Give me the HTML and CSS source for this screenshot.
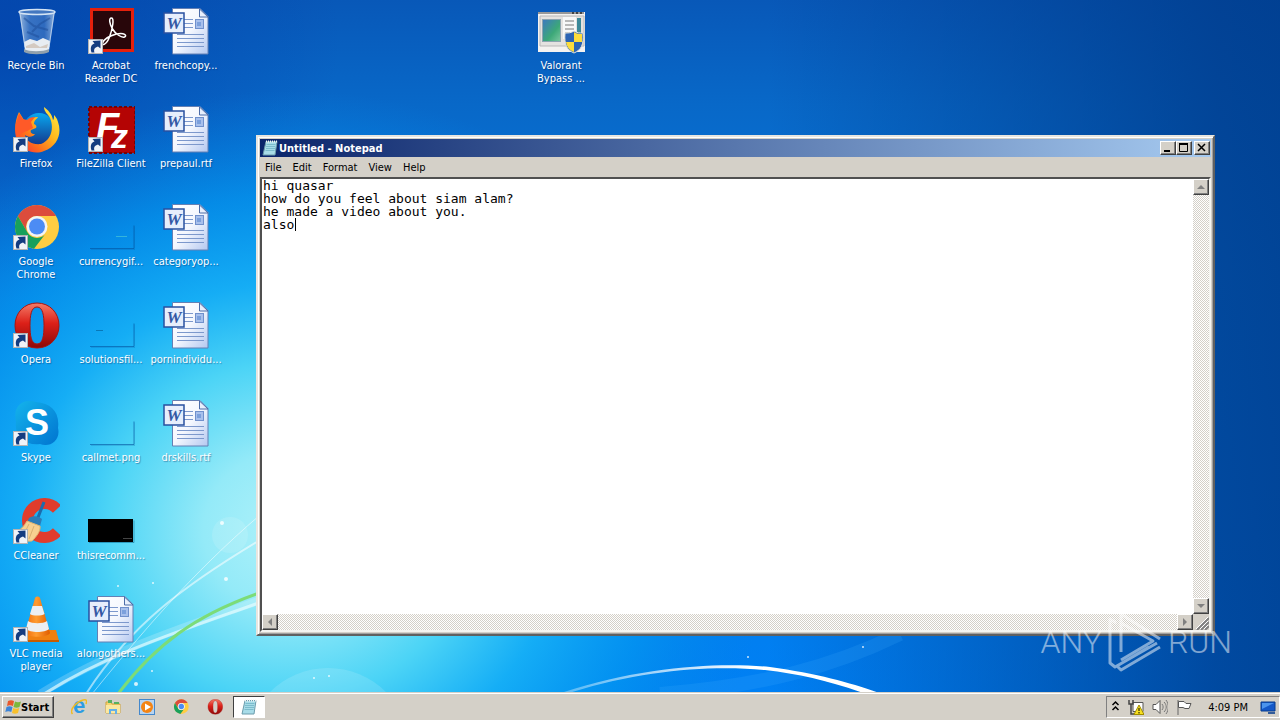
FILE: index.html
```html
<!DOCTYPE html>
<html lang="en">
<head>
<meta charset="utf-8">
<title>Desktop</title>
<link rel="stylesheet" href="styles.css">
</head>
<body>
<svg class="defs" width="0" height="0" aria-hidden="true">
  <defs>
    <linearGradient id="gDoc" x1="0" y1="0" x2="1" y2="1"><stop offset="0" stop-color="#fff"/><stop offset=".5" stop-color="#f4f7fe"/><stop offset="1" stop-color="#b4c8f0"/></linearGradient>
    <linearGradient id="gRed" x1="0" y1="0" x2="0" y2="1"><stop offset="0" stop-color="#f47c68"/><stop offset=".45" stop-color="#dc2018"/><stop offset="1" stop-color="#8c0808"/></linearGradient>
    <linearGradient id="gBin" x1="0" y1="0" x2="1" y2="0"><stop offset="0" stop-color="#b8cfe8" stop-opacity=".85"/><stop offset=".3" stop-color="#5b8fd0" stop-opacity=".6"/><stop offset=".7" stop-color="#4a80c8" stop-opacity=".6"/><stop offset="1" stop-color="#b4cdea" stop-opacity=".8"/></linearGradient>
    <linearGradient id="gFox" x1="1" y1="0" x2="0" y2="1"><stop offset="0" stop-color="#fff34a"/><stop offset=".4" stop-color="#ffb81c"/><stop offset=".7" stop-color="#ff6a1c"/><stop offset="1" stop-color="#f0204c"/></linearGradient>
    <linearGradient id="gGlobe" x1="0" y1="0" x2="0" y2="1"><stop offset="0" stop-color="#08a8f0"/><stop offset="1" stop-color="#14388c"/></linearGradient>
    <linearGradient id="gSky" x1="0" y1="0" x2="1" y2="1"><stop offset="0" stop-color="#14b4ec"/><stop offset="1" stop-color="#0074d0"/></linearGradient>
    <linearGradient id="gCone" x1="0" y1="0" x2="1" y2="0"><stop offset="0" stop-color="#f06808"/><stop offset=".45" stop-color="#ff9c30"/><stop offset="1" stop-color="#e05c00"/></linearGradient>
    <linearGradient id="gPic" x1="0" y1="0" x2="1" y2="1"><stop offset="0" stop-color="#3c78c0"/><stop offset=".6" stop-color="#3ca878"/><stop offset="1" stop-color="#7cc8a0"/></linearGradient>

    <symbol id="arrow" viewBox="0 0 15 15">
      <rect x=".5" y=".5" width="14" height="14" fill="#f0f3f8" stroke="#b4b4b4"/>
      <path d="M3.500 13.500C2 9 3 5.500 6.500 4.500L4.500 2l8-.5v8l-2.500-2C6.500 8.500 5.500 10.500 6.500 13.500z" fill="#143c80"/>
    </symbol>
    <symbol id="word" viewBox="0 0 48 48">
      <path d="M10.500.5H38l8 8V46H10.500z" fill="url(#gDoc)" stroke="#6480b4"/>
      <path d="M37.500 1v8H46z" fill="#e8effc" stroke="#4c6ca8"/>
      <path d="M22 11.500h9M22 15.500h9M22 19.500h9M15 26.500h27M15 30.500h27M15 34.500h27M15 38.500h27" stroke="#7c98cc"/>
      <rect x="33.500" y="11.500" width="8" height="9" fill="#a8c0ec" stroke="#7090cc"/>
      <rect x="35" y="14" width="4" height="4" fill="#7ca0dc"/>
      <rect x="2" y="5" width="20" height="20" fill="#e6eefc" stroke="#2850a0" stroke-width="1.500"/>
      <text x="12" y="21" text-anchor="middle" font-family="Liberation Serif, serif" font-size="17" font-weight="bold" font-style="italic" fill="#3458a4">W</text>
    </symbol>
    <symbol id="bin" viewBox="0 0 48 48">
      <path d="M7 3h36l-6 40c-4 3-20 3-24 0z" fill="url(#gBin)"/>
      <path d="M12 34l6-3 7 2 6-3 7 3-1 9c-4 3-20 3-24 0z" fill="#e8edf2"/>
      <path d="M14 38l8-3 6 4 8-3-1 4H14z" fill="#c0a890" opacity=".5"/>
      <path d="M12 10l10 8 14 4M20 24l8-8 10-6M15 24l12 5" stroke="#1c4c98" stroke-width="2" fill="none" opacity=".5"/>
      <path d="M12 41c5 3 19 3 25 0v3c-5 3-20 3-25 0z" fill="#90a0ac"/>
      <ellipse cx="25" cy="4" rx="18" ry="2.500" fill="#4478c0" stroke="#d4e4f4" stroke-width="1.500"/>
      <path d="M8 5l5 34M42 5l-5 34" stroke="#cfe0f4" opacity=".7"/>
    </symbol>
    <symbol id="acrobat" viewBox="0 0 48 48">
      <rect x="4.500" y="1.500" width="41" height="41" fill="#28060a" stroke="#e4200c" stroke-width="3"/>
      <path d="M24.500 10c-3 0-2 6 1 11s9 9 12 8 0-5-8-3-13 6-14 9 4 2 7-6 5-19 2-19z" fill="none" stroke="#fff" stroke-width="1.500"/>
    </symbol>
    <symbol id="firefox" viewBox="0 0 48 48">
      <circle cx="27" cy="23" r="16" fill="url(#gGlobe)"/>
      <path d="M32 1c0 5 4 7 6 11 4 9 2 22-9 26-9 1-15-3-16-9 4 3 8 2 10-1-4 0-5-2-4-4l5-2c1-2 0-3-2-4 0-4 3-5 4-7-4 0-7 1-9 4l-5-1-5-8C3 14 1 27 6 36c5 9 17 13 26 9 14-5 18-18 14-29-1-4-3-6-4-7 0 3 0 4-1 5-1-6-5-10-9-13z" fill="url(#gFox)"/>
      <path d="M7 7L5 14c-2 5-2 12 1 18 2-6 9-6 11-8l4-2-2-6 4-5c-4 0-6 1-8 3l-4-1z" fill="#ff5a28"/>
    </symbol>
    <symbol id="filezilla" viewBox="0 0 48 48">
      <rect x="2" y="1" width="46" height="46" fill="#b40404"/>
      <rect x="2" y="1" width="46" height="46" fill="none" stroke="#780404" stroke-width="2" stroke-dasharray="3 2"/>
      <text x="9" y="34" font-family="Liberation Sans, sans-serif" font-size="38" font-weight="bold" font-style="italic" fill="#fff">F</text>
      <text x="24" y="42" font-family="Liberation Sans, sans-serif" font-size="34" font-weight="bold" font-style="italic" fill="#fff">z</text>
    </symbol>
    <symbol id="chrome" viewBox="0 0 48 48">
      <circle cx="25" cy="23" r="22" fill="#ffcd42"/>
      <path d="M5.900 12A22 22 0 0 1 44 12H25a11 11 0 0 0-9.500 16.500z" fill="#dc4c3c"/>
      <path d="M5.900 12A22 22 0 0 0 22 44.800l12.500-16.300a11 11 0 0 1-19 0z" fill="#18a05c"/>
      <circle cx="25" cy="22.500" r="10.500" fill="#f4f4f4"/><circle cx="25" cy="22.500" r="8" fill="#4c8cf4"/>
    </symbol>
    <symbol id="opera" viewBox="0 0 48 48">
      <path fill-rule="evenodd" d="M25 1C12 1 3 11 3 23.500S12 46 25 46s22-10 22-22.500S38 1 25 1zm0 4c6 0 7 9 7 18.500S31 42 25 42s-7-9-7-18.500S19 5 25 5z" fill="url(#gRed)" stroke="#a81410"/>
    </symbol>
    <symbol id="skype" viewBox="0 0 48 48">
      <path d="M5 8C9 0 19 0 24 2c15 1 24 10 22 26 3 12-8 20-18 16C13 46 2 36 4 22c-1-6-1-11 1-14z" fill="url(#gSky)"/>
      <text x="25" y="35" text-anchor="middle" font-family="Liberation Sans, sans-serif" font-size="36" font-weight="bold" fill="#fff">S</text>
    </symbol>
    <symbol id="ccleaner" viewBox="0 0 48 48">
      <path d="M45 11A17 17 0 1 0 45 34" fill="none" stroke="#e03c2c" stroke-width="11"/>
      <path d="M32 4L25 22" stroke="#1c6cac" stroke-width="3"/>
      <path d="M17 20c4-3 10-2 13 1l-2 7-13-3z" fill="#2c7cb8"/>
      <path d="M15 23l13 5c1 5-4 11-8 15-7 1-14-3-17-9 6-2 9-6 12-11z" fill="#f8d090" stroke="#e0b470"/>
      <path d="M17 26l-6 12M22 28l-5 13" stroke="#dcb070"/>
    </symbol>
    <symbol id="vlc" viewBox="0 0 48 48">
      <path d="M10 34h34l3 11H6z" fill="#f08010"/><path d="M6 44h41v2H6z" fill="#c85c00"/>
      <path d="M23 2c1-2 4-2 5 0l10 35c-3 5-22 5-25 0z" fill="url(#gCone)"/>
      <path d="M20.500 10h9.500l2.500 8c-3 2-12 2-14.500 0zM16 25c4 3 15 3 19 0l2 8c-4 4-19 4-23 0z" fill="#eceff2"/>
    </symbol>
    <symbol id="thumb" viewBox="0 0 48 48">
      <path d="M3 44.500h44v-23" fill="none" stroke="#04509c" stroke-opacity=".6"/>
      <path d="M4 45.500h44v-23" fill="none" stroke="#04509c" stroke-opacity=".2"/>
    </symbol>
    <symbol id="black" viewBox="0 0 48 48">
      <rect x="1" y="21" width="45" height="23" fill="#000"/><path d="M36 40.500h9" stroke="#444"/><path d="M2 44.500h45v-22" fill="none" stroke="#046088" stroke-opacity=".5"/>
    </symbol>
    <symbol id="app" viewBox="0 0 48 48">
      <path d="M1 4h47v40H1z" fill="#f4f2f0"/><path d="M1 5h46" stroke="#989898" stroke-width="2"/><path d="M35 5h11" stroke="#444" stroke-width="2" stroke-dasharray="2 2"/><path d="M3 8h44v30H3z" fill="#e4e2e0" stroke="#b8b8b8"/>
      <rect x="5.500" y="11.500" width="18" height="22" fill="url(#gPic)" stroke="#8ca4b0"/>
      <path d="M26 9h13v22H26z" fill="#f8f8f8"/><path d="M28 13h9M28 17h9M28 21h9M28 25h7" stroke="#b8b8b8" stroke-width="2"/><path d="M40 10h4v17h-4z" fill="#3c8898"/>
      <path d="M37 23c3 2 6 2 9 2 1 12-2 17-9 20-7-3-10-8-9-20 3 0 6 0 9-2z" fill="#2c64b4" stroke="#e4e4dc"/>
      <path d="M37 24c3 2 5 2 8 2v8h-8zM37 34v10c-5-2-7-5-8-10z" fill="#fcdc3c"/>
    </symbol>
    <symbol id="note" viewBox="0 0 16 16">
      <path d="M4 1.500h11L13 15H1z" fill="#a8dce8" stroke="#6c9cac"/><path d="M4.500 4.500h9M4 6.500h9M4 8.500h9M3.500 10.500h9" stroke="#7cbccc"/><path d="M4 1.500h11" stroke="#f4f4f4" stroke-width="2" stroke-dasharray="1 1"/>
    </symbol>
    <symbol id="flag" viewBox="0 0 16 16">
      <path d="M3 2c2-1 4-1 6 0L8 7C6 6 4 6 2 7z" fill="#e8582c"/><path d="M10 2.500c2 1 4 1 6 0L14.500 8c-2 1-4 1-6 0z" fill="#7cb83c"/><path d="M1.500 8c2-1 4-1 6 0l-1.200 5c-2-1-4-1-6 0z" fill="#3c84d8"/><path d="M8.200 9c2 1 4 1 6 0L13 14c-2 1-4 1-6 0z" fill="#f8c02c"/>
    </symbol>
    <symbol id="ie" viewBox="0 0 16 16">
      <text x="8" y="14" text-anchor="middle" font-family="Liberation Sans, sans-serif" font-size="22" font-weight="bold" fill="#2c9ce4">e</text>
      <path d="M1.500 15C-2 11 5 3 12 1c4-1 4 1 3 4" fill="none" stroke="#f0bc24" stroke-width="1.500"/>
    </symbol>
    <symbol id="folder" viewBox="0 0 16 16">
      <path d="M1 3h5l1 2h8v9H1z" fill="#f4d470" stroke="#d0a43c"/><path d="M3 1h4v3H3zM9 3h5v2H9z" fill="#58b060"/><path d="M1 6h14v8H1z" fill="#fbe8a0"/><path d="M4 10h8v5h-2v-3H6v3H4z" fill="#64b0e8"/>
    </symbol>
    <symbol id="wmp" viewBox="0 0 16 16">
      <rect x=".5" y=".5" width="15" height="15" fill="#b8d4f0" stroke="#4488cc"/><circle cx="8" cy="8" r="6" fill="#f48414"/><path d="M6 4.500l6 3.500-6 3.500z" fill="#fff"/>
    </symbol>
  </defs>
</svg>

<main class="desktop">
  <svg class="wallpaper" viewBox="0 0 1280 692" preserveAspectRatio="none" aria-hidden="true">
    <defs>
      <linearGradient id="wBase" x1="0" y1="0" x2="0" y2="1"><stop offset="0" stop-color="#0858b8"/><stop offset=".15" stop-color="#0868c8"/><stop offset=".4" stop-color="#0878dc"/><stop offset="1" stop-color="#0080f4"/></linearGradient>
      <radialGradient id="wLeft" gradientUnits="userSpaceOnUse" cx="0" cy="0" r="1" gradientTransform="translate(0 40) scale(340 260)"><stop offset="0" stop-color="#0038a4" stop-opacity=".6"/><stop offset="1" stop-color="#0038a4" stop-opacity="0"/></radialGradient>
      <linearGradient id="wRight" x1="0" y1="0" x2="1" y2="0"><stop offset=".6" stop-color="#003c8c" stop-opacity="0"/><stop offset=".95" stop-color="#003c8c" stop-opacity=".8"/><stop offset="1" stop-color="#003c8c" stop-opacity=".85"/></linearGradient>
      <radialGradient id="wGlow" gradientUnits="userSpaceOnUse" cx="0" cy="0" r="1" gradientTransform="translate(290 530) scale(480 440)"><stop offset="0" stop-color="#b0f2fa"/><stop offset=".18" stop-color="#94eaf8"/><stop offset=".38" stop-color="#4cd4f6"/><stop offset=".56" stop-color="#16b0f6" stop-opacity=".95"/><stop offset=".76" stop-color="#0498f0" stop-opacity=".7"/><stop offset="1" stop-color="#0484e4" stop-opacity="0"/></radialGradient>
      <linearGradient id="wLine" x1="0" y1="0" x2="1" y2="0"><stop offset="0" stop-color="#fff" stop-opacity=".3"/><stop offset=".6" stop-color="#fff"/><stop offset="1" stop-color="#fff"/></linearGradient>
    </defs>
    <rect width="1280" height="692" fill="url(#wBase)"/>
    <rect width="1280" height="692" fill="url(#wLeft)"/>
    <rect width="1280" height="692" fill="url(#wRight)"/>
    <rect width="1280" height="692" fill="url(#wGlow)"/>
    <g fill="none">
      <path d="M40 694C110 650 190 625 275 595" stroke="#fff" stroke-opacity=".2" stroke-width="8"/>
      <path d="M44 694C110 652 190 628 275 597" stroke="#e4fcff" stroke-width="3" stroke-opacity=".7"/>
      <path d="M86 694C130 625 185 585 260 540" stroke="#fff" stroke-width="2" stroke-opacity=".55"/>
      <path d="M92 694C140 635 190 575 260 515" stroke="#fff" stroke-width="1" stroke-opacity=".5"/>
      <path d="M118 694C155 645 195 615 262 592" stroke="#7cdc78" stroke-width="3"/>
      <path d="M660 694C760 686 830 668 900 634" stroke="#4cb4ff" stroke-opacity=".16" stroke-width="14"/>
    </g>
    <path d="M558 694C640 666 720 662 770 667 820 674 855 684 882 694H866C830 681 800 674 765 670 710 665 640 670 566 694z" fill="url(#wLine)"/>
    <circle cx="328" cy="750" r="82" fill="#fff" fill-opacity=".13"/>
    <circle cx="230" cy="535" r="18" fill="#fff" fill-opacity=".12"/>
    <g fill="#fff" fill-opacity=".8"><circle cx="222" cy="523" r="2"/><circle cx="226" cy="579" r="2"/><circle cx="118" cy="586" r="1"/><circle cx="153" cy="583" r="1"/><circle cx="136" cy="684" r="2"/><circle cx="152" cy="671" r="1"/><circle cx="314" cy="678" r="1"/><circle cx="329" cy="676" r="1"/><circle cx="748" cy="657" r="1"/><circle cx="863" cy="647" r="1"/></g>
  </svg>

  <div class="icons">
    <button class="icon c1 r1"><svg><use href="#bin"/></svg><span>Recycle Bin</span></button>
    <button class="icon c1 r2"><svg><use href="#firefox"/><use href="#arrow" x="1" y="31" width="15" height="15"/></svg><span>Firefox</span></button>
    <button class="icon c1 r3"><svg><use href="#chrome"/><use href="#arrow" x="1" y="31" width="15" height="15"/></svg><span>Google Chrome</span></button>
    <button class="icon c1 r4"><svg><use href="#opera"/><use href="#arrow" x="1" y="31" width="15" height="15"/></svg><span>Opera</span></button>
    <button class="icon c1 r5"><svg><use href="#skype"/><use href="#arrow" x="1" y="31" width="15" height="15"/></svg><span>Skype</span></button>
    <button class="icon c1 r6"><svg><use href="#ccleaner"/><use href="#arrow" x="1" y="31" width="15" height="15"/></svg><span>CCleaner</span></button>
    <button class="icon c1 r7"><svg><use href="#vlc"/><use href="#arrow" x="1" y="31" width="15" height="15"/></svg><span>VLC media player</span></button>

    <button class="icon c2 r1"><svg><use href="#acrobat"/><use href="#arrow" x="1" y="31" width="15" height="15"/></svg><span>Acrobat Reader DC</span></button>
    <button class="icon c2 r2"><svg><use href="#filezilla"/><use href="#arrow" x="1" y="31" width="15" height="15"/></svg><span>FileZilla Client</span></button>
    <button class="icon c2 r3"><svg><use href="#thumb"/><path d="M29 32.500h11" stroke="#34b4dc"/></svg><span>currencygif...</span></button>
    <button class="icon c2 r4"><svg><use href="#thumb"/><path d="M9 28.500h7" stroke="#0878b8"/></svg><span>solutionsfil...</span></button>
    <button class="icon c2 r5"><svg><use href="#thumb"/></svg><span>callmet.png</span></button>
    <button class="icon c2 r6"><svg><use href="#black"/></svg><span>thisrecomm...</span></button>
    <button class="icon c2 r7"><svg><use href="#word"/></svg><span>alongothers...</span></button>

    <button class="icon c3 r1"><svg><use href="#word"/></svg><span>frenchcopy...</span></button>
    <button class="icon c3 r2"><svg><use href="#word"/></svg><span>prepaul.rtf</span></button>
    <button class="icon c3 r3"><svg><use href="#word"/></svg><span>categoryop...</span></button>
    <button class="icon c3 r4"><svg><use href="#word"/></svg><span>pornindividu...</span></button>
    <button class="icon c3 r5"><svg><use href="#word"/></svg><span>drskills.rtf</span></button>

    <button class="icon c8 r1"><svg><use href="#app"/></svg><span>Valorant Bypass ...</span></button>
  </div>

  <section class="window" aria-label="Untitled - Notepad">
    <header class="titlebar">
      <svg class="small-icon"><use href="#note"/></svg>
      <h1 class="title">Untitled - Notepad</h1>
      <div class="caption">
        <button class="raised cap" aria-label="Minimize"><svg viewBox="0 0 12 10"><path d="M2 8h6" stroke="#000" stroke-width="2"/></svg></button>
        <button class="raised cap" aria-label="Maximize"><svg viewBox="0 0 12 10"><path d="M1.500 .5h8v8h-8z" fill="none" stroke="#000"/><path d="M1 1h9" stroke="#000" stroke-width="2"/></svg></button>
        <button class="raised cap close" aria-label="Close"><svg viewBox="0 0 12 10"><path d="M2 1l7 7M9 1L2 8" stroke="#000" stroke-width="1.500"/></svg></button>
      </div>
    </header>
    <nav class="menubar"><button>File</button><button>Edit</button><button>Format</button><button>View</button><button>Help</button></nav>
    <div class="editor">
      <div class="page">
        <textarea class="text" aria-label="Document text" spellcheck="false">hi quasar
how do you feel about siam alam?
he made a video about you.
also</textarea>
        <span class="caret"></span>
      </div>
      <div class="track vertical">
        <button class="raised arrow" aria-label="Scroll up"><svg viewBox="0 0 12 12"><path d="M6 4l4 4H2z" fill="#808080"/></svg></button>
        <button class="raised arrow" aria-label="Scroll down"><svg viewBox="0 0 12 12"><path d="M6 8l4-4H2z" fill="#808080"/></svg></button>
      </div>
      <div class="track horizontal">
        <button class="raised arrow" aria-label="Scroll left"><svg viewBox="0 0 12 12"><path d="M4 6l4-4v8z" fill="#808080"/></svg></button>
        <button class="raised arrow" aria-label="Scroll right"><svg viewBox="0 0 12 12"><path d="M8 6L4 2v8z" fill="#808080"/></svg></button>
      </div>
      <svg class="grip" viewBox="0 0 16 16"><path d="M4 16L16 4M8 16l8-8M12 16l4-4" stroke="#808080" stroke-width="2"/><path d="M3 15L15 3M7 15l8-8M11 15l4-4" stroke="#fff"/></svg>
    </div>
  </section>
</main>

<div class="watermark" aria-hidden="true">
  <span>ANY</span>
  <svg viewBox="0 0 58 64"><path d="M10 13L4 9v44l5 4 42-24M15 42V4l39 25M15 42V13l32 18-32 19M54 37L15 60l-4-4 32-19" fill="none" stroke="#fff" stroke-width="3" stroke-linejoin="round"/></svg>
  <span>RUN</span>
</div>

<footer class="taskbar">
  <button class="raised start"><svg class="small-icon"><use href="#flag"/></svg>Start</button>
  <div class="quick">
    <button aria-label="Internet Explorer"><svg class="small-icon"><use href="#ie"/></svg></button>
    <button aria-label="Windows Explorer"><svg class="small-icon"><use href="#folder"/></svg></button>
    <button aria-label="Media Player"><svg class="small-icon"><use href="#wmp"/></svg></button>
    <button aria-label="Google Chrome"><svg class="small-icon"><use href="#chrome"/></svg></button>
    <button aria-label="Opera"><svg class="small-icon"><use href="#opera"/></svg></button>
    <button class="active" aria-label="Notepad"><svg class="small-icon"><use href="#note"/></svg></button>
  </div>
  <div class="tray">
    <button class="more" aria-label="Show hidden icons"><svg viewBox="0 0 8 12"><path d="M1 5l3-3 3 3M1 10l3-3 3 3" fill="none" stroke="#000" stroke-width="1.500"/></svg></button>
    <svg class="small-icon" viewBox="0 0 16 16"><path d="M5 3.500h10v9H5z" fill="#fff" stroke="#555"/><path d="M1 1v4h4V1M3 5v10h4" fill="none" stroke="#444" stroke-width="1.500"/><path d="M11 6l5 9.500H6z" fill="#f8e020" stroke="#a08c00"/><path d="M11 9v3M11 13v1.500" stroke="#000"/></svg>
    <svg class="small-icon" viewBox="0 0 16 16"><path d="M1 5.500h3l4-4v13l-4-4H1z" fill="#fff" stroke="#555"/><path d="M10 5c1.500 2 1.500 4 0 6M12 3c3 3 3 7 0 10M14 1c3 4 3 10 0 14" fill="none" stroke="#777"/></svg>
    <svg class="small-icon" viewBox="0 0 16 16"><path d="M2 1v15" stroke="#666"/><path d="M2.500 2.500H8l2 2h5l-2 5H9l-2-1H2.500z" fill="#fff" stroke="#555"/></svg>
    <time class="clock">4:09 PM</time>
    <svg class="small-icon" viewBox="0 0 16 16"><path d="M1 3h14v9H1z" fill="#1458c8" stroke="#083c8c"/><path d="M2 4h12L2 10z" fill="#4c94ec"/><path d="M8 14h7" stroke="#345c98" stroke-width="2"/></svg>
  </div>
</footer>
</body>
</html>
```
FILE: styles.css
```css
* { box-sizing: border-box; }

body {
  margin: 0;
  height: 100vh;
  display: flex;
  flex-direction: column;
  overflow: hidden;
  position: relative;
  font-family: "DejaVu Sans Condensed", "DejaVu Sans", sans-serif;
  font-size: 11px;
  line-height: 13px;
  color: #000;
  background: #d4d0c8;
}

button {
  margin: 0;
  padding: 0;
  border: 0;
  background: none;
  color: inherit;
  font: inherit;
}

.defs { position: absolute; }

.desktop {
  flex: 1;
  min-height: 0;
  position: relative;
}

.wallpaper {
  position: absolute;
  inset: 0;
  width: 100%;
  height: 100%;
}

/* Desktop shortcuts */
.icons {
  position: relative;
  display: grid;
  grid-template-columns: repeat(8, 72px);
  grid-template-rows: repeat(7, 98px);
  column-gap: 3px;
  padding-top: 8px;
  height: 100%;
}
.icon {
  display: flex;
  flex-direction: column;
  align-items: center;
  gap: 3px;
  color: #fff;
  text-align: center;
}
.icon svg { width: 48px; height: 48px; flex: none; overflow: visible; }
.icon span { max-width: 72px; text-shadow: 1px 1px 1px rgba(0, 30, 80, .4); }
.c1 { grid-column: 1; } .c2 { grid-column: 2; } .c3 { grid-column: 3; } .c8 { grid-column: 8; }
.r1 { grid-row: 1; } .r2 { grid-row: 2; } .r3 { grid-row: 3; } .r4 { grid-row: 4; }
.r5 { grid-row: 5; } .r6 { grid-row: 6; } .r7 { grid-row: 7; }

/* Raised 3D face */
.raised {
  background: #d4d0c8;
  border: 1px solid;
  border-color: #fff #404040 #404040 #fff;
  box-shadow: inset -1px -1px #808080;
}

/* Notepad window */
.window {
  position: absolute;
  left: 256px;
  right: 65px;
  top: 135px;
  bottom: 56px;
  display: flex;
  flex-direction: column;
  padding: 2px;
  background: #d4d0c8;
  border: 2px solid;
  border-color: #e8e6e0 #606060 #606060 #e8e6e0;
  box-shadow: inset 1px 1px #fff, inset -1px -1px #a0a0a0;
}
.titlebar {
  display: flex;
  align-items: center;
  height: 18px;
  padding: 0 1px 0 2px;
  background: linear-gradient(90deg, #0a246a, #a6caf0);
}
.title {
  flex: 1;
  margin: 0;
  padding-left: 1px;
  font-size: 11px;
  font-weight: bold;
  color: #fff;
}
.small-icon { width: 16px; height: 16px; flex: none; }
.caption { display: flex; }
.cap { width: 16px; height: 14px; display: flex; }
.cap svg { width: 12px; height: 10px; margin: 1px; }
.close { margin-left: 2px; }
.menubar { display: flex; gap: 1px; height: 20px; }
.menubar button { padding: 0 5px; }

.editor {
  flex: 1;
  min-height: 0;
  display: grid;
  grid-template-columns: 1fr 16px;
  grid-template-rows: 1fr 16px;
  border: 2px solid;
  border-color: #505050 #f4f4f0 #f4f4f0 #505050;
  background: #fff;
}
.page {
  position: relative;
  display: flex;
  font-family: "DejaVu Sans Mono", "Liberation Mono", monospace;
  font-size: 13px;
  line-height: 13px;
}
.text {
  flex: 1;
  margin: 0;
  padding: 0 1px;
  border: 0;
  outline: 0;
  resize: none;
  background: #fff;
  color: #000;
  font: inherit;
  overflow: hidden;
}
.caret {
  position: absolute;
  left: calc(4ch + 2px);
  top: 39px;
  width: 1px;
  height: 13px;
  background: #000;
}
.track {
  display: flex;
  justify-content: space-between;
  background: conic-gradient(#fff 25%, #d4d0c8 0 50%, #fff 0 75%, #d4d0c8 0) 0 0 / 2px 2px;
}
.vertical { flex-direction: column; }
.arrow { width: 16px; height: 16px; display: flex; }
.arrow svg { width: 12px; height: 12px; margin: 1px; }
.grip { width: 16px; height: 16px; background: #d4d0c8; }

/* Recorder mark */
.watermark {
  position: absolute;
  right: 48px;
  bottom: 46px;
  display: flex;
  align-items: center;
  gap: 4px;
  color: #fff;
  opacity: .5;
  pointer-events: none;
  font-family: Roboto, "Liberation Sans", sans-serif;
  font-weight: 300;
  font-size: 32px;
  line-height: 64px;
}
.watermark svg { width: 58px; height: 64px; }

/* Taskbar */
.taskbar {
  display: flex;
  align-items: center;
  gap: 9px;
  height: 28px;
  padding: 3px 0 1px 2px;
  background: #d4d0c8;
  box-shadow: inset 0 1px #d4d0c8, inset 0 2px #fff;
}
.start {
  display: flex;
  align-items: center;
  height: 22px;
  padding: 0 4px 0 2px;
  font-weight: bold;
}
.quick { display: flex; flex: 1; gap: 2px; }
.quick button {
  width: 32px;
  height: 22px;
  display: flex;
  align-items: center;
  justify-content: center;
}
.quick .active {
  background: #fff;
  border: 1px solid;
  border-color: #404040 #fff #fff #404040;
}
.tray {
  display: flex;
  align-items: center;
  gap: 8px;
  height: 22px;
  padding: 0 3px 0 4px;
  border: 1px solid;
  border-color: #808080 #fff #fff #808080;
}
.more { width: 9px; height: 16px; }
.more svg { width: 9px; height: 12px; }
.clock { padding: 0 4px 0 8px; }
```
